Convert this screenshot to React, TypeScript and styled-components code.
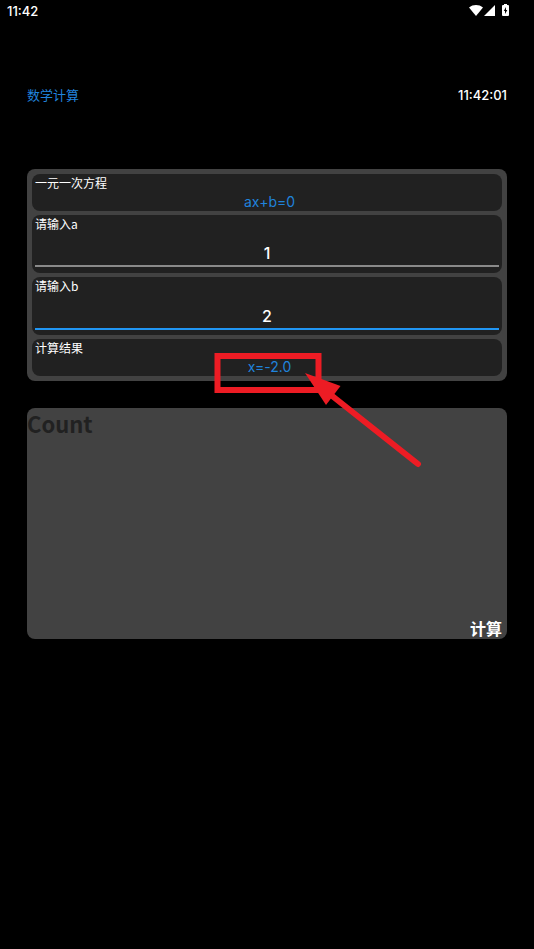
import { useState } from "react";
import styled, { createGlobalStyle } from "styled-components";

const blue = "#2083dc";
const cjk = `"Noto Sans CJK SC", sans-serif`;
const latin = `Inter, ${cjk}`;

const GlobalStyle = createGlobalStyle`
  *, *::before, *::after {
    box-sizing: border-box;
  }
  body {
    margin: 0;
    background: #000;
    color: #fff;
    font-family: ${cjk};
  }
`;

const StatusBar = styled.div`
  display: flex;
  align-items: center;
  justify-content: space-between;
  height: 22px;
  padding: 0 24px 0 7px;
`;

const StatusTime = styled.time`
  font: 500 13px/20px ${latin};
`;

const StatusIcons = styled.svg`
  display: block;
`;

const Header = styled.header`
  display: flex;
  align-items: center;
  justify-content: space-between;
  padding: 63px 27px 64px;
  line-height: 20px;
`;

const Title = styled.h1`
  margin: 0;
  color: ${blue};
  font-size: 13px;
  font-weight: 400;
`;

const Clock = styled.time`
  font-family: ${latin};
  font-size: 13px;
  font-weight: 500;
`;

const Main = styled.main`
  display: flex;
  flex-direction: column;
  gap: 27px;
  padding: 0 27px;
`;

const Panel = styled.section`
  display: flex;
  flex-direction: column;
  gap: 4px;
  padding: 5px;
  border-radius: 8px;
  background: #424242;
`;

const Card = styled.div`
  position: relative;
  display: flex;
  flex-direction: column;
  padding: 0 3px;
  border-radius: 8px;
  background: #212121;
`;

const Caption = styled.span`
  font-size: 12px;
  line-height: 18px;
`;

const FieldLabel = styled.label`
  font-size: 12px;
  line-height: 18px;
`;

const Value = styled.output`
  padding-left: 5px;
  color: ${blue};
  font-family: ${latin};
  font-size: 14px;
  font-weight: 400;
  line-height: 19px;
  text-align: center;
`;

const Field = styled.input`
  width: 100%;
  height: 34px;
  margin-bottom: 6px;
  padding: 8px 0 0;
  border: 0;
  border-bottom: 2px solid #8a8a8a;
  border-radius: 0;
  outline: 0;
  background: transparent;
  color: #fff;
  font: 500 16px/24px ${latin};
  text-align: center;

  &:focus {
    height: 35px;
    margin-bottom: 5px;
    border-bottom-color: #2196f3;
  }
`;

const Annotation = styled.svg`
  position: absolute;
  top: 13px;
  left: calc(50% - 53px);
  overflow: visible;
  pointer-events: none;
  z-index: 1;
`;

const CountPanel = styled.section`
  display: flex;
  flex-direction: column;
  justify-content: space-between;
  min-height: 231px;
  padding-right: 5px;
  border-radius: 8px;
  background: #424242;
`;

const CountTitle = styled.h2`
  margin: 0;
  color: #212121;
  font-size: 22px;
  font-weight: 700;
  line-height: 30px;
`;

const CountButton = styled.button`
  align-self: flex-end;
  padding: 0;
  border: 0;
  background: none;
  color: #fff;
  font: 700 16px/22px ${cjk};
  cursor: pointer;
`;

export default function App() {
  const [a, setA] = useState("1");
  const [b, setB] = useState("2");
  const [result, setResult] = useState("x=-2.0");

  const solve = () => {
    const x = -Number(b) / Number(a);
    setResult(Number.isFinite(x) ? `x=${x.toFixed(1)}` : "");
  };

  return (
    <>
      <GlobalStyle />
      <StatusBar>
        <StatusTime>11:42</StatusTime>
        <StatusIcons width="41" height="14" viewBox="0 0 41 14" fill="#fff" aria-hidden="true">
          <path d="M0 3.500C4 .2 10 .2 14 3.500L7 12Z" />
          <path d="M15 12L26 1V12Z" />
          <path
            fillRule="evenodd"
            d="M35 0h3v1h1q1 0 1 1v9q0 1-1 1h-5q-1 0-1-1V2q0-1 1-1h1ZM37 3l-2.200 4H36v3l2.300-4H37Z"
          />
        </StatusIcons>
      </StatusBar>
      <Header>
        <Title>数学计算</Title>
        <Clock>11:42:01</Clock>
      </Header>
      <Main>
        <Panel>
          <Card>
            <Caption>一元一次方程</Caption>
            <Value>ax+b=0</Value>
          </Card>
          <Card>
            <FieldLabel htmlFor="a">请输入a</FieldLabel>
            <Field id="a" inputMode="decimal" value={a} onChange={(e) => setA(e.target.value)} />
          </Card>
          <Card>
            <FieldLabel htmlFor="b">请输入b</FieldLabel>
            <Field
              id="b"
              inputMode="decimal"
              autoFocus
              value={b}
              onChange={(e) => setB(e.target.value)}
            />
          </Card>
          <Card>
            <Caption>计算结果</Caption>
            <Value htmlFor="a b">{result}</Value>
            <Annotation width="208" height="116" viewBox="0 0 208 116" aria-hidden="true">
              <rect x="3.5" y="4" width="101" height="34" fill="none" stroke="#ed1c24" strokeWidth="6" />
              <path d="M117 43L204 112" stroke="#ed1c24" strokeWidth="6" strokeLinecap="round" />
              <path d="M91 21L126.500 34L112 53Z" fill="#ed1c24" />
            </Annotation>
          </Card>
        </Panel>
        <CountPanel>
          <CountTitle>Count</CountTitle>
          <CountButton type="button" onClick={solve}>
            计算
          </CountButton>
        </CountPanel>
      </Main>
    </>
  );
}
